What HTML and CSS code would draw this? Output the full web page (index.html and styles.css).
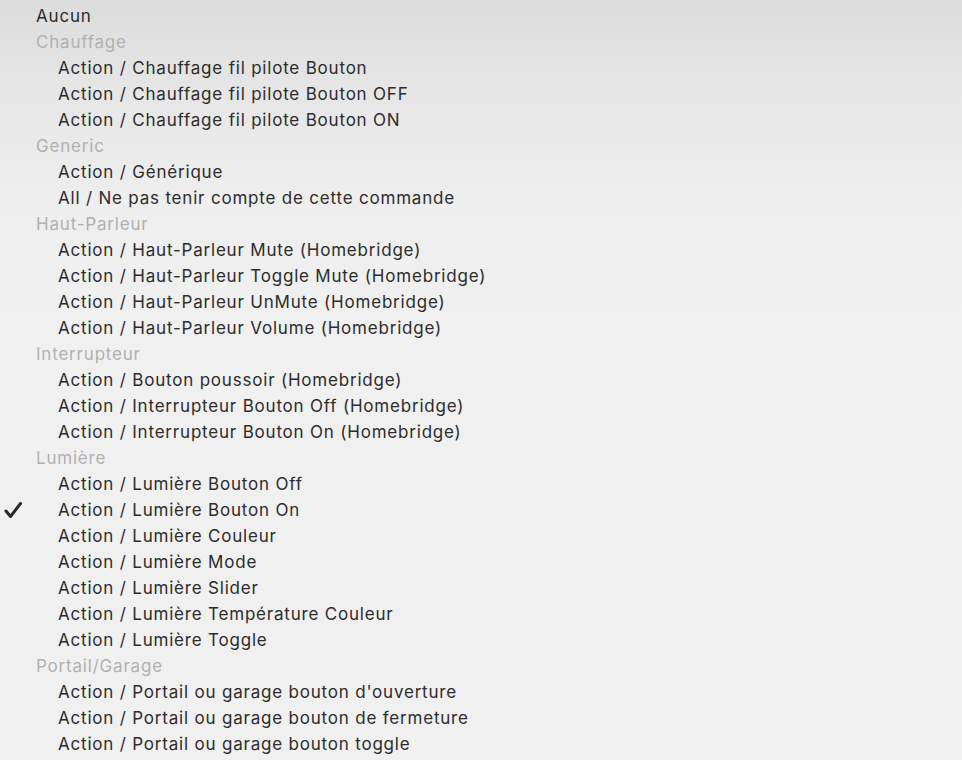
FILE: index.html
```html
<!DOCTYPE html>
<html lang="fr">
<head>
<meta charset="utf-8">
<link rel="stylesheet" href="styles.css">
</head>
<body>
<ul class="menu">
  <li class="item top">Aucun</li>
  <li class="header">Chauffage</li>
  <li class="item">Action / Chauffage fil pilote Bouton</li>
  <li class="item">Action / Chauffage fil pilote Bouton OFF</li>
  <li class="item">Action / Chauffage fil pilote Bouton ON</li>
  <li class="header">Generic</li>
  <li class="item">Action / Générique</li>
  <li class="item">All / Ne pas tenir compte de cette commande</li>
  <li class="header">Haut-Parleur</li>
  <li class="item">Action / Haut-Parleur Mute (Homebridge)</li>
  <li class="item">Action / Haut-Parleur Toggle Mute (Homebridge)</li>
  <li class="item">Action / Haut-Parleur UnMute (Homebridge)</li>
  <li class="item">Action / Haut-Parleur Volume (Homebridge)</li>
  <li class="header">Interrupteur</li>
  <li class="item">Action / Bouton poussoir (Homebridge)</li>
  <li class="item">Action / Interrupteur Bouton Off (Homebridge)</li>
  <li class="item">Action / Interrupteur Bouton On (Homebridge)</li>
  <li class="header">Lumière</li>
  <li class="item">Action / Lumière Bouton Off</li>
  <li class="item checked"><svg class="check" width="20" height="18" viewBox="0 0 20 18"><path d="M3 10 L7.5 15.5 L17.5 2.5" fill="none" stroke="#2b2b2b" stroke-width="3" stroke-linecap="round" stroke-linejoin="round"/></svg>Action / Lumière Bouton On</li>
  <li class="item">Action / Lumière Couleur</li>
  <li class="item">Action / Lumière Mode</li>
  <li class="item">Action / Lumière Slider</li>
  <li class="item">Action / Lumière Température Couleur</li>
  <li class="item">Action / Lumière Toggle</li>
  <li class="header">Portail/Garage</li>
  <li class="item">Action / Portail ou garage bouton d'ouverture</li>
  <li class="item">Action / Portail ou garage bouton de fermeture</li>
  <li class="item">Action / Portail ou garage bouton toggle</li>
</ul>
</body>
</html>
```
FILE: styles.css
```css
html, body {
  margin: 0;
  height: 100%;
}
body {
  background: linear-gradient(to bottom, #dcdcdc 0px, #e6e6e6 90px, #eeeeee 200px, #f0f0f0 320px, #f0f0f0 100%);
  font-family: Inter, "Noto Sans", sans-serif;
  font-size: 17px;
  color: #2c2c2c;
  overflow: hidden;
}
.menu {
  list-style: none;
  margin: 0;
  padding: 3px 0 0 0;
}
.menu li {
  height: 26px;
  line-height: 26px;
  white-space: nowrap;
  position: relative;
  letter-spacing: 0.8px;
}
.header {
  padding-left: 36px;
  color: #b1b1b1;
}
.item {
  padding-left: 58px;
}
.item.top {
  padding-left: 36px;
}
.check {
  position: absolute;
  left: 3px;
  top: 4px;
}
```
